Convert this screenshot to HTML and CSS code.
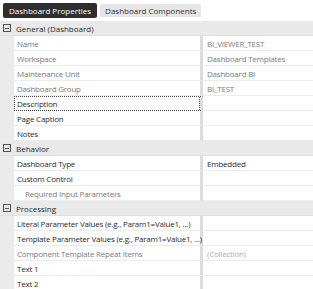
FILE: index.html
```html
<!DOCTYPE html>
<html lang="en">
<head>
  <meta charset="UTF-8">
  <title>Dashboard Properties</title>
  <link rel="stylesheet" href="styles.css">
</head>
<body>

<div class="tabs">
  <span class="tab active">Dashboard Properties</span>
  <span class="tab">Dashboard Components</span>
</div>

<div class="grid">
  <!-- General -->
  <div class="category"><span class="toggle"></span>General (Dashboard)</div>
  <div class="row readonly"><span class="name">Name</span><span class="value">BI_VIEWER_TEST</span></div>
  <div class="row readonly"><span class="name">Workspace</span><span class="value">Dashboard Templates</span></div>
  <div class="row readonly"><span class="name">Maintenance Unit</span><span class="value">Dashboard BI</span></div>
  <div class="row readonly"><span class="name">Dashboard Group</span><span class="value">BI_TEST</span></div>
  <div class="row focused"><span class="name">Description</span><span class="value"></span></div>
  <div class="row"><span class="name">Page Caption</span><span class="value"></span></div>
  <div class="row"><span class="name">Notes</span><span class="value"></span></div>

  <!-- Behavior -->
  <div class="category"><span class="toggle"></span>Behavior</div>
  <div class="row"><span class="name">Dashboard Type</span><span class="value">Embedded</span></div>
  <div class="row"><span class="name">Custom Control</span><span class="value"></span></div>
  <div class="row readonly sub"><span class="name">Required Input Parameters</span><span class="value"></span></div>

  <!-- Processing -->
  <div class="category"><span class="toggle"></span>Processing</div>
  <div class="row"><span class="name">Literal Parameter Values (e.g., Param1=Value1, ...)</span><span class="value"></span></div>
  <div class="row"><span class="name">Template Parameter Values (e.g., Param1=Value1, ...)</span><span class="value"></span></div>
  <div class="row readonly"><span class="name">Component Template Repeat Items</span><span class="value muted">(Collection)</span></div>
  <div class="row"><span class="name">Text 1</span><span class="value"></span></div>
  <div class="row"><span class="name">Text 2</span><span class="value"></span></div>
</div>

</body>
</html>
```

FILE: styles.css
```css
body {
  margin: 0;
  font-family: "Open Sans", "Noto Sans", sans-serif;
  font-size: 8px;
  color: #2b2b2b;
  background: #ffffff;
  overflow: hidden;
}

.tabs {
  display: flex;
  gap: 3px;
  padding: 3px 0 0 3px;
  height: 17px;
  align-items: flex-start;
}

.tab {
  height: 13px;
  line-height: 13px;
  padding: 0 5px;
  margin-top: 1px;
  background: #e6e6e6;
  color: #333333;
  border-radius: 2px 2px 0 0;
}

.tab.active {
  height: 15px;
  line-height: 15px;
  margin-top: 0;
  padding: 0 6px;
  background: #2e2e2e;
  color: #ffffff;
  border-radius: 2px;
}

.grid {
  margin-top: 1px;
  background: #ebebeb;
}

.category {
  display: flex;
  align-items: center;
  height: 15px;
  background: #e9e9e9;
  color: #2b2b2b;
  border-bottom: 1px solid #e0e0e0;
  box-sizing: border-box;
}

.toggle {
  width: 6px;
  height: 6px;
  margin: 0 5px 0 3px;
  border: 1px solid #555555;
  position: relative;
}

.toggle::after {
  content: "";
  position: absolute;
  left: 1px;
  right: 1px;
  top: 2.5px;
  height: 1px;
  background: #555555;
}

.row {
  display: grid;
  grid-template-columns: 189px 1fr;
  margin-left: 14px;
  height: 15px;
  background: #ffffff;
  letter-spacing: -0.22px;
}

.row .name,
.row .value {
  display: flex;
  align-items: center;
  border-bottom: 1px solid #ececec;
  box-sizing: border-box;
  white-space: nowrap;
}

.row .name {
  padding-left: 3px;
  border-right: 3px solid #dcdcdc;
}

.row .value {
  padding-left: 4px;
}

.row.readonly .name,
.row.readonly .value {
  color: #7b7b7b;
}

.row.sub .name {
  padding-left: 11px;
}

.row .value.muted {
  color: #b0b0b0;
}

.row.focused .name {
  border-top: 1px dotted #444444;
  border-bottom: 1px dotted #444444;
  border-left: 1px dotted #444444;
  padding-left: 2px;
  position: relative;
}

.row.focused .name::after {
  content: "";
  position: absolute;
  right: 0;
  top: 0;
  bottom: 0;
  border-right: 1px dotted #444444;
}
```
